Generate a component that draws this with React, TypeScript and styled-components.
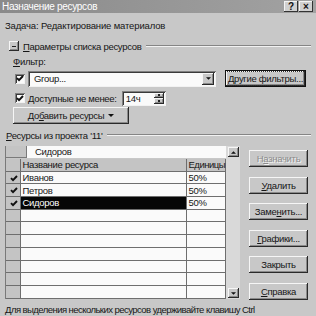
import styled, { createGlobalStyle } from 'styled-components'

const GlobalStyle = createGlobalStyle`
  html, body {
    margin: 0;
    padding: 0;
    background: #c8c8c8;
  }
  body {
    font-family: "Liberation Sans", Arial, sans-serif;
  }
`

const Dialog = styled.div`
  width: 316px;
  height: 316px;
  overflow: hidden;
  background: #c8c8c8;
  color: #161616;
  font-size: 9.5px;
  letter-spacing: -0.3px;
  display: flex;
  flex-direction: column;
`

const TitleBar = styled.div`
  flex: none;
  height: 13px;
  display: flex;
  align-items: center;
  justify-content: space-between;
  padding: 0 3px 0 2px;
  background: linear-gradient(90deg, #8a8a8a, #a2a2a2);
  color: #fff;
  font-size: 10px;
`

const TitleButtons = styled.div`
  display: flex;
  gap: 1px;
`

const TitleButton = styled.div`
  width: 14px;
  height: 11px;
  background: #d0d0d0;
  box-shadow: inset -1px -1px #333, inset 1px 1px #f4f4f4;
  display: flex;
  align-items: center;
  justify-content: center;
  color: #111;
  font-weight: bold;
  font-size: 10px;
  letter-spacing: 0;
`

const Content = styled.div`
  flex: 1;
  display: flex;
  flex-direction: column;
  padding: 0 5px;
`

const Line = styled.div<{ $top: number; $left?: number; $spacing?: number }>`
  height: 12px;
  line-height: 12px;
  margin-top: ${(p) => p.$top}px;
  padding-left: ${(p) => p.$left ?? 0}px;
  letter-spacing: ${(p) => p.$spacing ?? -0.3}px;
  white-space: nowrap;
`

const SectionHeader = styled.div<{ $top: number; $left: number }>`
  display: flex;
  align-items: center;
  gap: 4px;
  height: 12px;
  margin-top: ${(p) => p.$top}px;
  padding-left: ${(p) => p.$left}px;
  white-space: nowrap;
`

const SectionRule = styled.div`
  flex: 1;
  height: 0;
  border-top: 1px solid #858585;
  border-bottom: 1px solid #f2f2f2;
  margin-left: 1px;
`

const raised = `
  background: #c8c8c8;
  box-shadow: inset -1px -1px #2a2a2a, inset 1px 1px #f6f6f6, inset -2px -2px #8a8a8a;
`

const sunken = `
  background: #fafafa;
  box-shadow: inset 1px 1px #808080, inset -1px -1px #f2f2f2, inset 2px 2px #3a3a3a;
`

const CollapseButton = styled.div`
  width: 10px;
  height: 10px;
  ${raised}
  display: flex;
  align-items: center;
  justify-content: center;
  &::after {
    content: '';
    width: 4px;
    height: 1px;
    background: #222;
  }
`

const Row = styled.div<{ $top: number; $left: number; $height: number }>`
  display: flex;
  align-items: center;
  height: ${(p) => p.$height}px;
  margin-top: ${(p) => p.$top}px;
  padding-left: ${(p) => p.$left}px;
  white-space: nowrap;
`

const CheckBox = styled.div`
  flex: none;
  width: 10px;
  height: 10px;
  ${sunken}
  display: flex;
  align-items: center;
  justify-content: center;
  margin-right: 3px;
`

const Combo = styled.div`
  width: 188px;
  height: 16px;
  ${sunken}
  display: flex;
  align-items: center;
  justify-content: space-between;
  padding: 0 2px 0 6px;
  box-sizing: border-box;
`

const DropButton = styled.div`
  width: 12px;
  height: 12px;
  ${raised}
  display: flex;
  align-items: center;
  justify-content: center;
`

const Button = styled.div<{ $width?: number; $disabled?: boolean; $default?: boolean }>`
  flex: none;
  width: ${(p) => (p.$width ? `${p.$width}px` : 'auto')};
  height: 17px;
  ${raised}
  ${(p) => (p.$default ? 'outline: 1px solid #111; outline-offset: -1px; box-shadow: inset -2px -2px #2a2a2a, inset 2px 2px #f6f6f6, inset -3px -3px #8a8a8a;' : '')}
  display: flex;
  align-items: center;
  justify-content: center;
  gap: 4px;
  color: ${(p) => (p.$disabled ? '#8c8c8c' : '#161616')};
  text-shadow: ${(p) => (p.$disabled ? '1px 1px #f4f4f4' : 'none')};
  white-space: nowrap;
`

const FocusText = styled.span`
  outline: 1px dotted #333;
  outline-offset: 1px;
  padding: 0 1px;
`

const SpinBox = styled.div`
  width: 44px;
  height: 15px;
  ${sunken}
  display: flex;
  align-items: center;
  justify-content: space-between;
  padding: 0 2px 0 4px;
  box-sizing: border-box;
  margin-left: 5px;
`

const SpinButtons = styled.div`
  display: flex;
  flex-direction: column;
  height: 11px;
`

const SpinHalf = styled.div`
  width: 10px;
  height: 5.5px;
  ${raised}
  display: flex;
  align-items: center;
  justify-content: center;
`

const Dot = styled.div`
  width: 2px;
  height: 2px;
  background: #222;
`

const GridArea = styled.div`
  display: flex;
  gap: 9px;
  margin-top: 5px;
  height: 153px;
`

const GridBox = styled.div`
  display: flex;
  width: 235px;
  height: 153px;
  box-shadow: inset 1px 0 #7a7a7a;
`

const GridMain = styled.div`
  width: 221px;
  display: flex;
  flex-direction: column;
  overflow: hidden;
  padding-left: 1px;
  box-sizing: border-box;
`

const EntryRow = styled.div`
  display: flex;
  height: 12px;
  margin-bottom: 1px;
`

const EntryHead = styled.div`
  width: 21px;
  background: #c4c4c4;
  box-shadow: inset -1px 0 #7a7a7a, inset 0 -1px #7a7a7a;
`

const EntryInput = styled.div`
  flex: 1;
  background: #fafafa;
  line-height: 12px;
  padding-left: 8px;
`

const GridRow = styled.div`
  display: grid;
  grid-template-columns: 15px 166px 39px;
  height: 12.7px;
  flex: none;
`

const Cell = styled.div<{ $head?: boolean; $selected?: boolean; $center?: boolean }>`
  background: ${(p) => (p.$head ? '#c4c4c4' : p.$selected ? '#060606' : '#fafafa')};
  color: ${(p) => (p.$selected ? '#fff' : '#161616')};
  box-shadow: inset -1px -1px #6e6e6e;
  line-height: 12px;
  padding-left: ${(p) => (p.$center ? 0 : 1.5)}px;
  white-space: nowrap;
  overflow: hidden;
  display: flex;
  align-items: center;
  justify-content: ${(p) => (p.$center ? 'center' : 'flex-start')};
`

const ScrollBar = styled.div`
  width: 14px;
  display: flex;
  flex-direction: column;
  justify-content: space-between;
  align-items: center;
  padding: 1px 0 1px;
  box-sizing: border-box;
  background: #d9d9d9;
`

const ScrollArrow = styled.div`
  width: 11px;
  height: 10px;
  ${raised}
  display: flex;
  align-items: center;
  justify-content: center;
`

const ButtonColumn = styled.div`
  display: flex;
  flex-direction: column;
  gap: 9.5px;
  padding-top: 4px;
`

const Triangle = ({ up = false, w = 5 }: { up?: boolean; w?: number }) => (
  <svg width={w} height={Math.ceil(w / 2)} viewBox="0 0 6 3">
    <path d={up ? 'M0 3 L3 0 L6 3 Z' : 'M0 0 L6 0 L3 3 Z'} fill="#111" />
  </svg>
)

const Check = () => (
  <svg width="8" height="7" viewBox="0 0 8 7">
    <path d="M1 3.2 L3 5.2 L7 1" stroke="#111" strokeWidth="1.9" fill="none" />
  </svg>
)

const rows = [
  { name: 'Иванов', units: '50%', checked: true },
  { name: 'Петров', units: '50%', checked: true },
  { name: 'Сидоров', units: '50%', checked: true, selected: true },
  ...Array.from({ length: 7 }, () => ({ name: '', units: '', checked: false }))
]

const App = () => (
  <>
    <GlobalStyle />
    <Dialog>
      <TitleBar>
        <span>Назначение ресурсов</span>
        <TitleButtons>
          <TitleButton>?</TitleButton>
          <TitleButton>×</TitleButton>
        </TitleButtons>
      </TitleBar>
      <Content>
        <Line $top={7} $spacing={-0.15}>
          Задача: Редактирование материалов
        </Line>
        <SectionHeader $top={8} $left={4}>
          <CollapseButton />
          <span>
            <u>П</u>араметры списка ресурсов
          </span>
          <SectionRule />
        </SectionHeader>
        <Line $top={4} $left={8}>
          <u>Ф</u>ильтр:
        </Line>
        <Row $top={2} $left={10} $height={17}>
          <CheckBox>
            <Check />
          </CheckBox>
          <Combo>
            <span>Group...</span>
            <DropButton>
              <Triangle />
            </DropButton>
          </Combo>
          <Button $width={81} $default style={{ marginLeft: 9 }}>
            <FocusText>Другие фильтры...</FocusText>
          </Button>
        </Row>
        <Row $top={3} $left={10} $height={16}>
          <CheckBox>
            <Check />
          </CheckBox>
          <span>
            <u>Д</u>оступные не менее:
          </span>
          <SpinBox>
            <span>14ч</span>
            <SpinButtons>
              <SpinHalf>
                <Dot />
              </SpinHalf>
              <SpinHalf>
                <Dot />
              </SpinHalf>
            </SpinButtons>
          </SpinBox>
        </Row>
        <Row $top={1} $left={8} $height={16}>
          <Button $width={116}>
            <span>
              До<u>б</u>авить ресурсы
            </span>
            <Triangle w={6} />
          </Button>
        </Row>
        <SectionHeader $top={6} $left={1}>
          <span>
            <u>Р</u>есурсы из проекта '11'
          </span>
          <SectionRule />
        </SectionHeader>
        <GridArea>
          <GridBox>
            <GridMain>
              <EntryRow>
                <EntryHead />
                <EntryInput>Сидоров</EntryInput>
              </EntryRow>
              <GridRow>
                <Cell $head />
                <Cell $head>Название ресурса</Cell>
                <Cell $head style={{ letterSpacing: '-0.5px' }}>
                  Единицы
                </Cell>
              </GridRow>
              {rows.map((r, i) => (
                <GridRow key={i}>
                  <Cell $head $center>
                    {r.checked && <Check />}
                  </Cell>
                  <Cell $selected={r.selected}>{r.name}</Cell>
                  <Cell>{r.units}</Cell>
                </GridRow>
              ))}
            </GridMain>
            <ScrollBar>
              <ScrollArrow>
                <Triangle up />
              </ScrollArrow>
              <ScrollArrow>
                <Triangle />
              </ScrollArrow>
            </ScrollBar>
          </GridBox>
          <ButtonColumn>
            <Button $width={59} $disabled>
              <span>
                Н<u>а</u>значить
              </span>
            </Button>
            <Button $width={59}>
              <span>
                <u>У</u>далить
              </span>
            </Button>
            <Button $width={59}>
              <span>
                Заме<u>н</u>ить...
              </span>
            </Button>
            <Button $width={59}>
              <span>
                <u>Г</u>рафики...
              </span>
            </Button>
            <Button $width={59}>Закрыть</Button>
            <Button $width={59}>
              <span>
                <u>С</u>правка
              </span>
            </Button>
          </ButtonColumn>
        </GridArea>
        <Line $top={5} $spacing={-0.55}>
          Для выделения нескольких ресурсов удерживайте клавишу Ctrl
        </Line>
      </Content>
    </Dialog>
  </>
)

export default App
